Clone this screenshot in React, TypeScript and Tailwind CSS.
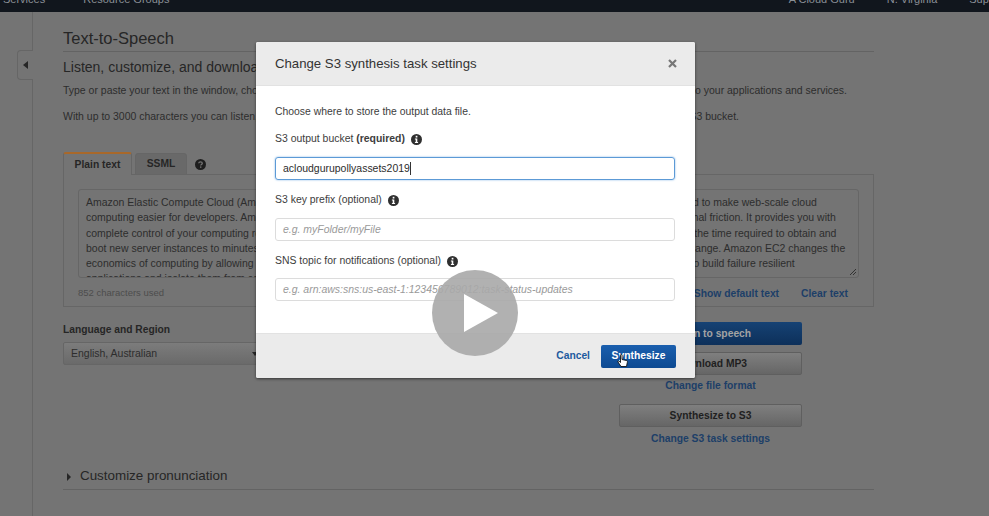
import { ReactNode } from 'react';

const BODY_TEXT =
  "Amazon Elastic Compute Cloud (Amazon EC2) is a web service that provides resizable compute capacity in the cloud. It is designed to make web-scale cloud computing easier for developers. Amazon EC2's simple web service interface allows you to obtain and configure capacity with minimal friction. It provides you with complete control of your computing resources and lets you run on Amazon's proven computing environment. Amazon EC2 reduces the time required to obtain and boot new server instances to minutes, allowing you to quickly scale capacity, both up and down, as your computing requirements change. Amazon EC2 changes the economics of computing by allowing you to pay only for capacity that you actually use. Amazon EC2 provides developers the tools to build failure resilient applications and isolate them from common failure scenarios.";

function InfoIcon() {
  return (
    <svg width="11" height="11" viewBox="0 0 11 11" className="shrink-0">
      <circle cx="5.5" cy="5.5" r="5.5" fill="#2f2f2f" />
      <rect x="4.7" y="1.8" width="1.7" height="1.7" fill="#fff" />
      <path d="M3.9 4.5H6.3V8.1H7.1V9.1H3.9V8.1H4.7V5.5H3.9Z" fill="#fff" />
    </svg>
  );
}

function HelpIcon() {
  return (
    <svg width="11" height="11" viewBox="0 0 11 11" className="shrink-0">
      <circle cx="5.5" cy="5.5" r="5.5" fill="#1e1e1e" />
      <path d="M3.7 4.3C3.8 3.3 4.5 2.8 5.5 2.8C6.6 2.8 7.3 3.4 7.3 4.2C7.3 5.4 5.7 5.4 5.7 6.6" fill="none" stroke="#747474" strokeWidth="1.3" />
      <rect x="5" y="7.4" width="1.4" height="1.4" fill="#747474" />
    </svg>
  );
}

function Field({ label, required, children }: { label: string; required?: boolean; children: ReactNode }) {
  return (
    <div className="flex flex-col">
      <div className="flex items-center gap-[6px] h-[14px] text-[10.45px] text-[#3d3d3d]">
        <span>
          {label} {required ? <b className="font-bold">(required)</b> : '(optional)'}
        </span>
        <InfoIcon />
      </div>
      {children}
    </div>
  );
}

function GrayButton({ children, className }: { children: ReactNode; className: string }) {
  return (
    <div className={`h-[23px] rounded-[2px] border border-[#5f5f5f] bg-gradient-to-b from-[#7f7f7f] to-[#666666] flex items-center justify-center text-[10.3px] font-bold text-[#1f1f1f] ${className}`}>
      {children}
    </div>
  );
}

export default function App() {
  return (
    <div className="relative w-[989px] h-[516px] overflow-hidden bg-[#747474] font-['Liberation_Sans',Arial,sans-serif]">
      <header className="h-[12px] bg-[#11161d] flex items-end overflow-hidden text-[11px] leading-[12px] text-[#8a8f96] whitespace-nowrap">
        <div className="flex items-center w-full translate-y-[-7px]">
          <span className="ml-[3px]">Services</span>
          <span className="ml-[38px]">Resource Groups</span>
          <span className="ml-[44px]">*</span>
          <svg width="12" height="12" viewBox="0 0 12 12" className="ml-[551px]" fill="none" stroke="#8a8f96">
            <path d="M2 10H10L9 8V5C9 3 8 2 6 2S3 3 3 5V8Z" />
          </svg>
          <span className="ml-[20px]">A Cloud Guru</span>
          <span className="ml-[32px]">N. Virginia</span>
          <span className="ml-[32px]">Support</span>
        </div>
      </header>

      <div className="flex">
        <aside className="relative w-[33px] h-[504px] border-r border-[#666666] shrink-0">
          <div className="absolute left-[17px] top-[38px] w-[16px] h-[30px] bg-[#747474] border border-r-0 border-[#666666] rounded-l-[4px] flex items-center justify-center">
            <span className="w-0 h-0 border-y-[4px] border-y-transparent border-r-[5px] border-r-[#262626]" />
          </div>
        </aside>

        <main className="w-[811px] ml-[30px] shrink-0 text-[#2a2a2a]">
          <h1 className="pt-[15px] h-[40px] border-b border-[#636363] text-[16.5px] leading-[22px] text-[#262626]">Text-to-Speech</h1>
          <h2 className="mt-[5px] text-[14px] leading-[20px] text-[#262626]">Listen, customize, and download speech.</h2>
          <p className="mt-[7px] text-[10.47px] leading-[14px] whitespace-nowrap text-[#2d2d2d]">
            Type or paste your text in the window, choose your language and region, choose a voice, choose Listen to speech, and then integrate it to your applications and services.
          </p>
          <p className="mt-[12px] text-[10.47px] leading-[14px] whitespace-nowrap text-[#2d2d2d]">
            With up to 3000 characters you can listen, download, or save immediately. For up to 100,000 characters your task must be saved to an S3 bucket.
          </p>

          <div className="mt-[28px] flex items-end h-[23px] relative z-10">
            <div className="w-[69px] h-[23px] bg-[#747474] border border-b-0 border-[#666666] border-t-2 border-t-[#a8682a] rounded-t-[3px] flex items-center justify-center text-[10.3px] font-bold text-[#262626]">Plain text</div>
            <div className="ml-[3px] w-[52px] h-[22px] bg-[#696969] border border-[#666666] rounded-t-[3px] flex items-center justify-center text-[10.3px] font-bold text-[#262626]">SSML</div>
            <div className="ml-[8px] mb-[5px]">
              <HelpIcon />
            </div>
          </div>

          <section className="-mt-px h-[133px] border border-[#666666] px-[14px] pt-[14px]">
            <div className="relative h-[89px] border border-[#666666] rounded-[3px] px-[7px] pt-[5px] overflow-hidden text-[10.47px] leading-[15.3px] text-[#2d2d2d]">
              {BODY_TEXT}
              <svg width="8" height="8" viewBox="0 0 8 8" className="absolute right-px bottom-px" stroke="#333" fill="none">
                <path d="M1 7L7 1M4 7L7 4" />
              </svg>
            </div>
            <div className="flex items-center h-[31px] text-[9.5px] text-[#4d4d4d]">
              <span>852 characters used</span>
              <span className="ml-auto mr-[22px] text-[10.3px] font-bold text-[#1d3f68]">Show default text</span>
              <span className="mr-[11px] text-[10.3px] font-bold text-[#1d3f68]">Clear text</span>
            </div>
          </section>

          <div className="flex mt-[16px]">
            <div className="w-[200px] shrink-0">
              <div className="text-[10.25px] font-bold leading-[14px] text-[#262626]">Language and Region</div>
              <div className="mt-[5px] h-[23px] rounded-[2px] border border-[#666666] bg-gradient-to-b from-[#7c7c7c] to-[#6a6a6a] flex items-center pl-[7px] pr-[4px] text-[10.47px] text-[#2d2d2d]">
                English, Australian
                <span className="ml-auto w-0 h-0 border-x-[3px] border-x-transparent border-t-[4px] border-t-[#262626]" />
              </div>
            </div>
            <div className="ml-[356px] -mt-px w-[183px] flex flex-col items-center">
              <div className="h-[23px] w-full rounded-[2px] bg-gradient-to-b from-[#164274] to-[#0d305a] flex items-center justify-center text-[10.3px] font-bold text-[#a3a3a3]">Listen to speech</div>
              <GrayButton className="w-full mt-[7px]">Download MP3</GrayButton>
              <span className="mt-[4px] text-[10.3px] leading-[14px] font-bold text-[#1d3f68]">Change file format</span>
              <GrayButton className="w-full mt-[11px]">Synthesize to S3</GrayButton>
              <span className="mt-[5px] text-[10.3px] leading-[14px] font-bold text-[#1d3f68]">Change S3 task settings</span>
            </div>
          </div>

          <div className="mt-[18px] h-[26px] border-b border-[#636363] flex items-center gap-[9px] pl-[4px] text-[13.4px] text-[#262626]">
            <span className="w-0 h-0 border-y-[4px] border-y-transparent border-l-[4px] border-l-[#262626]" />
            Customize pronunciation
          </div>
        </main>
      </div>

      {/* modal */}
      <div className="absolute left-[256px] top-[42px] w-[439px] h-[336px] rounded-[2px] bg-white shadow-[0_1px_3px_rgba(0,0,0,0.55)] flex flex-col overflow-hidden">
        <div className="h-[44px] shrink-0 bg-[#ebebeb] border-b border-[#e2e2e2] flex items-center justify-between pl-[19px] pr-[18px] text-[13.2px] text-[#333333]">
          Change S3 synthesis task settings
          <svg width="9" height="9" viewBox="0 0 9 9" stroke="#777777" strokeWidth="2.2">
            <path d="M1 1L8 8M8 1L1 8" />
          </svg>
        </div>
        <div className="flex-1 pl-[19px] pr-[20px] pt-[19px] flex flex-col">
          <p className="text-[10.4px] leading-[14px] text-[#3d3d3d] mb-[13px]">Choose where to store the output data file.</p>
          <Field label="S3 output bucket" required>
            <div className="mt-[11px] h-[23px] rounded-[3px] border border-[#5c9ad6] shadow-[0_0_2px_#7ab0e4] flex items-center px-[7px] text-[10.47px] text-[#2d2d2d]">
              acloudgurupollyassets2019<span className="w-px h-[13px] bg-[#333]" />
            </div>
          </Field>
          <div className="mt-[13px]">
            <Field label="S3 key prefix">
              <div className="mt-[11px] h-[23px] rounded-[3px] border border-[#dcdcdc] flex items-center px-[7px] text-[10.47px] italic text-[#9a9a9a]">e.g. myFolder/myFile</div>
            </Field>
          </div>
          <div className="mt-[13px]">
            <Field label="SNS topic for notifications">
              <div className="mt-[10px] h-[23px] rounded-[3px] border border-[#dcdcdc] flex items-center px-[7px] text-[10.47px] italic text-[#9a9a9a]">e.g. arn:aws:sns:us-east-1:123456789012:task-status-updates</div>
            </Field>
          </div>
        </div>
        <div className="h-[45px] shrink-0 bg-[#ebebeb] border-t border-[#e2e2e2] flex items-center justify-end pr-[19px] gap-[11px]">
          <span className="text-[10.3px] font-bold text-[#1d5a9e]">Cancel</span>
          <div className="relative w-[75px] h-[23px] rounded-[2px] bg-gradient-to-b from-[#1a5fae] to-[#0d4a92] flex items-center justify-center text-[10.3px] font-bold text-white">
            Synthesize
            <svg width="12" height="14" viewBox="0 0 12 14" className="absolute left-[16px] top-[9px]">
              <path d="M3.5 1.2C3.5 0.4 5 0.4 5 1.2V5.5L9.5 6.5C10.5 6.8 10.5 7.5 10.3 8.5L9.5 12.5H4L1 8C0.6 7.2 1.5 6.6 2.2 7.2L3.5 8.5Z" fill="#fff" stroke="#111" strokeWidth="0.9" />
            </svg>
          </div>
        </div>
      </div>

      {/* video play overlay */}
      <div className="absolute left-[432px] top-[270px] w-[86px] h-[86px] rounded-full bg-[#a9a9a9]/90 flex items-center justify-center">
        <svg width="36" height="38" viewBox="0 0 36 38" className="ml-[12px]">
          <path d="M1 0L35 19L1 38Z" fill="#fff" />
        </svg>
      </div>
    </div>
  );
}
